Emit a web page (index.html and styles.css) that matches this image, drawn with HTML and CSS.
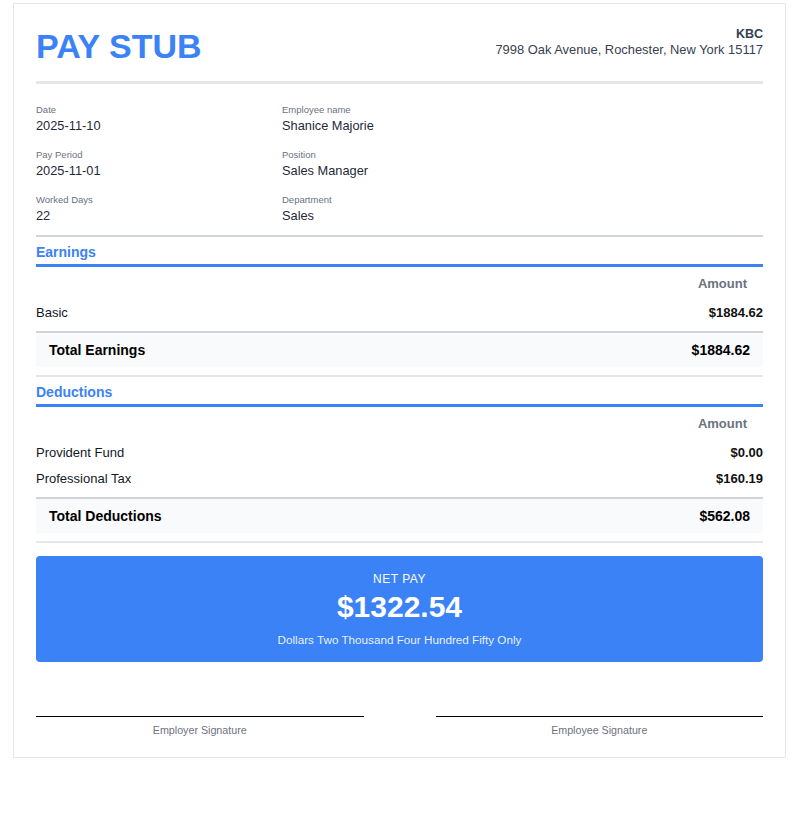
FILE: index.html
```html
<!DOCTYPE html>
<html lang="en">
<head>
<meta charset="utf-8">
<title>Pay Stub</title>
<link rel="stylesheet" href="styles.css">
</head>
<body>
<div class="stub">
  <header class="head">
    <h1 class="title">PAY STUB</h1>
    <div class="company">
      <div class="company-name">KBC</div>
      <div class="company-addr">7998 Oak Avenue, Rochester, New York 15117</div>
    </div>
  </header>

  <section class="info">
    <div class="item"><div class="label">Date</div><div class="value">2025-11-10</div></div>
    <div class="item"><div class="label">Employee name</div><div class="value">Shanice Majorie</div></div>
    <div class="item"><div class="label">Pay Period</div><div class="value">2025-11-01</div></div>
    <div class="item"><div class="label">Position</div><div class="value">Sales Manager</div></div>
    <div class="item"><div class="label">Worked Days</div><div class="value">22</div></div>
    <div class="item"><div class="label">Department</div><div class="value">Sales</div></div>
  </section>

  <section class="block">
    <h2 class="block-title">Earnings</h2>
    <div class="thead"><span class="th">Amount</span></div>
    <div class="row"><span>Basic</span><span class="amt">$1884.62</span></div>
    <div class="total"><span>Total Earnings</span><span>$1884.62</span></div>
  </section>

  <section class="block">
    <h2 class="block-title">Deductions</h2>
    <div class="thead"><span class="th">Amount</span></div>
    <div class="row"><span>Provident Fund</span><span class="amt">$0.00</span></div>
    <div class="row"><span>Professional Tax</span><span class="amt">$160.19</span></div>
    <div class="total"><span>Total Deductions</span><span>$562.08</span></div>
  </section>

  <section class="net">
    <div class="net-label">NET PAY</div>
    <div class="net-amount">$1322.54</div>
    <div class="net-words">Dollars Two Thousand Four Hundred Fifty Only</div>
  </section>

  <section class="signs">
    <div class="sign"><div class="sign-line"></div><div class="sign-label">Employer Signature</div></div>
    <div class="sign"><div class="sign-line"></div><div class="sign-label">Employee Signature</div></div>
  </section>
</div>
</body>
</html>
```

FILE: styles.css
```css
* { box-sizing: border-box; }
html, body { margin: 0; padding: 0; background: #ffffff; }
body {
  font-family: "Liberation Sans", Arial, Helvetica, sans-serif;
  color: #111827;
}
.stub {
  margin: 3px 0 0 13px;
  width: 773px;
  border: 1px solid #e5e7eb;
  padding: 23px 22px 20px;
}
.head {
  display: flex;
  justify-content: space-between;
  align-items: flex-start;
  padding-bottom: 16px;
  border-bottom: 3px solid #e5e7eb;
}
.title {
  margin: 0;
  font-size: 34px;
  line-height: 38px;
  font-weight: 700;
  color: #3b82f6;
}
.company { text-align: right; }
.company-name {
  font-size: 12.5px;
  line-height: 14px;
  font-weight: 700;
  color: #374151;
}
.company-addr {
  font-size: 12.9px;
  line-height: 15px;
  color: #374151;
  margin-top: 1px;
}
.info {
  display: grid;
  grid-template-columns: 246px 1fr;
  row-gap: 16px;
  padding: 20px 0 12px;
  border-bottom: 2px solid #d1d5db;
}
.label {
  font-size: 9.5px;
  line-height: 12px;
  color: #6b7280;
  margin-bottom: 2px;
}
.value {
  font-size: 12.8px;
  line-height: 15px;
  color: #1f2937;
}
.block {
  padding-bottom: 8px;
  border-bottom: 2px solid #e5e7eb;
}
.block-title {
  margin: 0;
  padding: 7px 0 3px;
  font-size: 14px;
  line-height: 17px;
  font-weight: 700;
  color: #3b82f6;
  border-bottom: 3px solid #3b82f6;
}
.thead {
  display: flex;
  justify-content: flex-end;
  height: 32px;
  align-items: center;
  padding-right: 16px;
}
.th {
  font-size: 13px;
  font-weight: 700;
  color: #6b7280;
}
.row {
  display: flex;
  justify-content: space-between;
  align-items: center;
  height: 26px;
  font-size: 13px;
  color: #111827;
}
.amt { font-weight: 700; color: #111111; }
.total {
  margin-top: 6px;
  border-top: 2px solid #d1d5db;
  background: #f9fafb;
  height: 36px;
  padding: 0 13px;
  display: flex;
  justify-content: space-between;
  align-items: center;
  font-size: 14px;
  font-weight: 700;
  color: #000000;
}
.net {
  margin-top: 13px;
  background: #3b82f6;
  border-radius: 4px;
  padding: 16px 16px 15px;
  text-align: center;
  color: #ffffff;
}
.net-label {
  font-size: 12px;
  line-height: 14px;
  letter-spacing: 0.5px;
}
.net-amount {
  margin-top: 4px;
  font-size: 30px;
  line-height: 34px;
  font-weight: 700;
}
.net-words {
  margin-top: 9px;
  font-size: 11.7px;
  line-height: 14px;
  color: rgba(255, 255, 255, 0.9);
}
.signs {
  margin-top: 54px;
  display: grid;
  grid-template-columns: 1fr 1fr;
  column-gap: 72px;
}
.sign-line { border-top: 1px solid #000000; }
.sign-label {
  padding-top: 7px;
  text-align: center;
  font-size: 10.7px;
  line-height: 13px;
  color: #6b7280;
}
```
